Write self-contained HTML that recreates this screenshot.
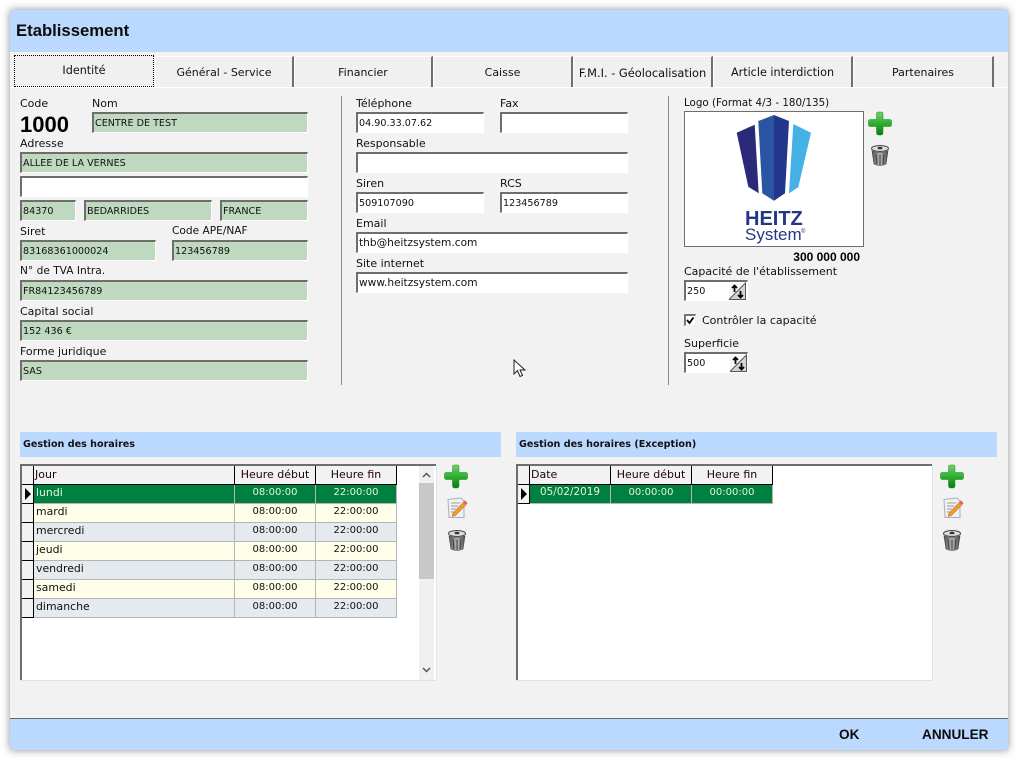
<!DOCTYPE html>
<html lang="fr"><head><meta charset="utf-8"><title>Etablissement</title>
<style>
html,body{margin:0;padding:0;background:#fff}
body{position:relative;width:1016px;height:758px;overflow:hidden;font:11px "DejaVu Sans","Liberation Sans",sans-serif;color:#111}
body *{box-sizing:border-box}
#w{position:absolute;left:10px;top:10px;width:998px;height:740px;background:#f2f2f2;box-shadow:0 0 8px rgba(0,0,0,.45)}
.a{position:absolute;white-space:nowrap}
.l{position:absolute;white-space:nowrap;height:13px;line-height:13px}
.f{position:absolute;height:21px;border:2px solid #6e6e6e;border-right:1px solid #fff;border-bottom:1px solid #fff;background:#fff;padding-left:1px;line-height:19px;white-space:nowrap;font-size:9.6px}
.m{font-size:10.6px}
.g{background:#bed9bf}
.tab{position:absolute;top:56px;height:31px;background:#f0f0f0;border-top:1px solid #fff;border-left:1px solid #fff;border-right:2px solid #6e6e6e;text-align:center;line-height:31px}
.hd{position:absolute;background:#f2f2f2;top:466px;height:19px;border-right:1px solid #000;border-bottom:1px solid #000;line-height:18px;white-space:nowrap;text-align:center;color:#200}
.c{position:absolute;height:19px;border-right:1px solid #b5b5b5;border-bottom:1px solid #b5b5b5;line-height:15px;text-align:center;white-space:nowrap;font-size:10px}
.n{font-size:10.9px;text-align:left;padding-left:2px}
.ind{position:absolute;height:19px;width:12px;background:#f2f2f2;border-right:1px solid #000;border-bottom:1px solid #000}
.sec{position:absolute;top:432px;height:25px;background:#bbd8fe;font-weight:bold;line-height:26px;padding-left:3px;font-size:9.6px;color:#111}
.grid{position:absolute;top:464px;width:416px;height:216px;background:#fff;border-top:2px solid #6e6e6e;border-left:2px solid #6e6e6e;box-shadow:1px 1px 0 #e2e2e2}
svg{position:absolute;overflow:visible}
</style></head><body>
<div id="w"></div>
<div class="a" style="left:10px;top:10px;width:998px;height:42px;background:#bbd8fe"></div>
<div class="a" style="left:16px;top:20px;font:bold 16.7px/22px 'Liberation Sans',sans-serif;color:#0c0c0c">Etablissement</div>

<div class="a" style="left:10px;top:87px;width:998px;height:1px;background:#fff"></div>
<div class="tab" style="left:14px;width:140px;top:55px;height:32px;border:1px dotted #000;line-height:30px;font-size:11.2px">Identité</div>
<div class="tab" style="left:155px;width:139px;line-height:32px">Général - Service</div>
<div class="tab" style="left:294px;width:139px;line-height:32px">Financier</div>
<div class="tab" style="left:433px;width:140px;line-height:32px">Caisse</div>
<div class="tab" style="left:573px;width:140px;line-height:32px;font-size:11.4px">F.M.I. - Géolocalisation</div>
<div class="tab" style="left:713px;width:140px;line-height:32px;font-size:11.2px">Article interdiction</div>
<div class="tab" style="left:853px;width:141px;line-height:32px">Partenaires</div>

<div class="l" style="left:20px;top:97px">Code</div>
<div class="l" style="left:92px;top:97px">Nom</div>
<div class="a" style="left:20px;top:112px;font:bold 22px/25px 'Liberation Sans',sans-serif;color:#000">1000</div>
<div class="f g" style="left:92px;top:112px;width:216px">CENTRE DE TEST</div>
<div class="l" style="left:20px;top:137px">Adresse</div>
<div class="f g" style="left:20px;top:152px;width:288px">ALLEE DE LA VERNES</div>
<div class="f" style="left:20px;top:176px;width:288px"></div>
<div class="f g" style="left:20px;top:200px;width:56px">84370</div>
<div class="f g" style="left:84px;top:200px;width:128px">BEDARRIDES</div>
<div class="f g" style="left:220px;top:200px;width:88px">FRANCE</div>
<div class="l" style="left:20px;top:225px">Siret</div>
<div class="l" style="left:172px;top:225px;font-size:10.6px">Code APE/NAF</div>
<div class="f g" style="left:20px;top:240px;width:136px">83168361000024</div>
<div class="f g" style="left:172px;top:240px;width:136px">123456789</div>
<div class="l" style="left:20px;top:265px;font-size:10.6px">N° de TVA Intra.</div>
<div class="f g" style="left:20px;top:280px;width:288px">FR84123456789</div>
<div class="l" style="left:20px;top:305px">Capital social</div>
<div class="f g" style="left:20px;top:320px;width:288px">152 436 €</div>
<div class="l" style="left:20px;top:345px">Forme juridique</div>
<div class="f g" style="left:20px;top:360px;width:288px">SAS</div>

<div class="a" style="left:341px;top:96px;width:1px;height:289px;background:#8a8a8a"></div>
<div class="a" style="left:668px;top:96px;width:1px;height:289px;background:#8a8a8a"></div>

<div class="l" style="left:356px;top:97px">Téléphone</div>
<div class="l" style="left:500px;top:97px">Fax</div>
<div class="f" style="left:356px;top:112px;width:128px">04.90.33.07.62</div>
<div class="f" style="left:500px;top:112px;width:128px"></div>
<div class="l" style="left:356px;top:137px">Responsable</div>
<div class="f" style="left:356px;top:152px;width:272px"></div>
<div class="l" style="left:356px;top:177px">Siren</div>
<div class="l" style="left:500px;top:177px">RCS</div>
<div class="f" style="left:356px;top:192px;width:128px">509107090</div>
<div class="f" style="left:500px;top:192px;width:128px">123456789</div>
<div class="l" style="left:356px;top:217px">Email</div>
<div class="f m" style="left:356px;top:232px;width:272px">thb@heitzsystem.com</div>
<div class="l" style="left:356px;top:257px">Site internet</div>
<div class="f m" style="left:356px;top:272px;width:272px">www.heitzsystem.com</div>

<div class="l" style="left:684px;top:97px;font-size:10.3px">Logo (Format 4/3 - 180/135)</div>
<div class="a" style="left:684px;top:111px;width:180px;height:136px;background:#fff;border:1px solid #6e6e6e"></div>
<svg style="left:684px;top:111px" width="180" height="136" viewBox="0 0 180 136">
<path d="M52.700 21.700 70.700 13.700 74.700 82.300 64.300 75.700Z" fill="#2b2a78"/>
<path d="M74.300 10 90 4V89.700L78.300 82.300Z" fill="#2a55a5"/>
<path d="M90 4 105 10 101 82.300 90 89.700Z" fill="#22378c"/>
<path d="M109.300 13 127 21.700 114.300 76.300 105 82.300Z" fill="#46b1e5"/>
<text x="61" y="114" font-family="Liberation Sans" font-weight="bold" font-size="20" fill="#233785">HEITZ</text>
<text x="61" y="129" font-family="Liberation Sans" font-size="17" fill="#233785">System</text>
<text x="117" y="122" font-family="Liberation Sans" font-size="6" fill="#233785">®</text>
</svg>
<div class="a" style="left:760px;top:250px;width:100px;text-align:right;font:bold 12px/15px 'Liberation Sans',sans-serif;color:#000">300 000 000</div>
<div class="l" style="left:684px;top:265px">Capacité de l'établissement</div>
<div class="f" style="left:684px;top:280px;width:64px;padding-left:1px">250</div>
<div class="l" style="left:702px;top:314px">Contrôler la capacité</div>
<div class="a" style="left:684px;top:314px;width:12px;height:12px;background:#fff;border:2px solid #777;border-right:1px solid #eee;border-bottom:1px solid #eee"></div>
<svg style="left:684px;top:314px" width="12" height="12"><path d="M3 6 5.500 9 9.500 3.500" fill="none" stroke="#000" stroke-width="1.800"/></svg>
<div class="l" style="left:684px;top:337px">Superficie</div>
<div class="f" style="left:684px;top:352px;width:64px">500</div>
<svg style="left:729px;top:283px" width="17" height="17" viewBox="0 0 17 17"><rect width="17" height="17" fill="#f6f6f6"/><path d="M0 16.500 16.500 0V16.500Z" fill="#d4d4d4"/><path d="M0 16.500H16.500V0L0 16.500" fill="none" stroke="#555"/><path d="M5.500 2.500V9M3 5 5.500 2.500 8 5" stroke="#000" stroke-width="1.800" fill="none"/><path d="M11.500 8V14.500M9 12 11.500 14.500 14 12" stroke="#000" stroke-width="1.800" fill="none"/></svg>
<svg style="left:730px;top:355px" width="17" height="17" viewBox="0 0 17 17"><rect width="17" height="17" fill="#f6f6f6"/><path d="M0 16.500 16.500 0V16.500Z" fill="#d4d4d4"/><path d="M0 16.500H16.500V0L0 16.500" fill="none" stroke="#555"/><path d="M5.500 2.500V9M3 5 5.500 2.500 8 5" stroke="#000" stroke-width="1.800" fill="none"/><path d="M11.500 8V14.500M9 12 11.500 14.500 14 12" stroke="#000" stroke-width="1.800" fill="none"/></svg>

<svg style="left:513px;top:359px" width="14" height="20"><path d="M1 1V15L4.500 11.500 7 17.500 9.500 16.500 7 11H12Z" fill="#fff" stroke="#222" stroke-width="1"/></svg>

<div class="sec" style="left:20px;width:481px">Gestion des horaires</div>
<div class="sec" style="left:516px;width:481px">Gestion des horaires (Exception)</div>

<div class="grid" style="left:20px"></div>
<div class="a" style="left:419px;top:466px;width:15px;height:214px;background:#f0f0f0"></div>
<div class="a" style="left:419px;top:483px;width:15px;height:96px;background:#c8c8c8"></div>
<svg style="left:419px;top:466px" width="15" height="214"><path d="M4 11 7.500 7.500 11 11M4 202 7.500 205.500 11 202" fill="none" stroke="#555" stroke-width="1.500"/></svg>

<div class="hd" style="left:22px;width:12px"></div>
<div class="hd" style="left:34px;width:201px;text-align:left;padding-left:1px">Jour</div>
<div class="hd" style="left:235px;width:81px">Heure début</div>
<div class="hd" style="left:316px;width:81px">Heure fin</div>

<div class="ind" style="left:22px;top:485px"></div>
<svg style="left:25px;top:488px" width="8" height="12"><path d="M0 0 6 6 0 12Z" fill="#000"/></svg>
<div class="c n" style="left:34px;top:485px;width:201px;background:#008040;color:#e8f4d8">lundi</div>
<div class="c" style="left:235px;top:485px;width:81px;background:#008040;color:#e8f4d8">08:00:00</div>
<div class="c" style="left:316px;top:485px;width:81px;background:#008040;color:#e8f4d8">22:00:00</div>
<div class="ind" style="left:22px;top:504px"></div>
<div class="c n" style="left:34px;top:504px;width:201px;background:#ffffe9">mardi</div>
<div class="c" style="left:235px;top:504px;width:81px;background:#ffffe9">08:00:00</div>
<div class="c" style="left:316px;top:504px;width:81px;background:#ffffe9">22:00:00</div>
<div class="ind" style="left:22px;top:523px"></div>
<div class="c n" style="left:34px;top:523px;width:201px;background:#e4eaee">mercredi</div>
<div class="c" style="left:235px;top:523px;width:81px;background:#e4eaee">08:00:00</div>
<div class="c" style="left:316px;top:523px;width:81px;background:#e4eaee">22:00:00</div>
<div class="ind" style="left:22px;top:542px"></div>
<div class="c n" style="left:34px;top:542px;width:201px;background:#ffffe9">jeudi</div>
<div class="c" style="left:235px;top:542px;width:81px;background:#ffffe9">08:00:00</div>
<div class="c" style="left:316px;top:542px;width:81px;background:#ffffe9">22:00:00</div>
<div class="ind" style="left:22px;top:561px"></div>
<div class="c n" style="left:34px;top:561px;width:201px;background:#e4eaee">vendredi</div>
<div class="c" style="left:235px;top:561px;width:81px;background:#e4eaee">08:00:00</div>
<div class="c" style="left:316px;top:561px;width:81px;background:#e4eaee">22:00:00</div>
<div class="ind" style="left:22px;top:580px"></div>
<div class="c n" style="left:34px;top:580px;width:201px;background:#ffffe9">samedi</div>
<div class="c" style="left:235px;top:580px;width:81px;background:#ffffe9">08:00:00</div>
<div class="c" style="left:316px;top:580px;width:81px;background:#ffffe9">22:00:00</div>
<div class="ind" style="left:22px;top:599px"></div>
<div class="c n" style="left:34px;top:599px;width:201px;background:#e4eaee">dimanche</div>
<div class="c" style="left:235px;top:599px;width:81px;background:#e4eaee">08:00:00</div>
<div class="c" style="left:316px;top:599px;width:81px;background:#e4eaee">22:00:00</div>

<div class="grid" style="left:516px"></div>
<div class="hd" style="left:518px;width:12px"></div>
<div class="hd" style="left:530px;width:81px;text-align:left;padding-left:1px">Date</div>
<div class="hd" style="left:611px;width:81px">Heure début</div>
<div class="hd" style="left:692px;width:81px">Heure fin</div>
<div class="ind" style="left:518px;top:485px"></div>
<svg style="left:521px;top:488px" width="8" height="12"><path d="M0 0 6 6 0 12Z" fill="#000"/></svg>
<div class="c" style="left:530px;top:485px;width:81px;background:#008040;color:#e8f4d8;font-size:10.4px">05/02/2019</div>
<div class="c" style="left:611px;top:485px;width:81px;background:#008040;color:#e8f4d8">00:00:00</div>
<div class="c" style="left:692px;top:485px;width:81px;background:#008040;color:#e8f4d8">00:00:00</div>

<svg width="0" height="0" style="left:0;top:0"><defs>
<linearGradient id="gp" x1="0" y1="0" x2="0" y2="1"><stop offset="0" stop-color="#6fd56f"/><stop offset=".5" stop-color="#2fae30"/><stop offset="1" stop-color="#0c7a14"/></linearGradient>
<linearGradient id="gt" x1="0" y1="0" x2="1" y2="0"><stop offset="0" stop-color="#4e4e4e"/><stop offset=".5" stop-color="#b8b8b8"/><stop offset="1" stop-color="#4a4a4a"/></linearGradient>
<g id="plus"><path d="M8.500 1.500Q8.500 0 10 0H13.500Q15 0 15 1.500V7.500H22Q23.500 7.500 23.500 9V13Q23.500 14.500 22 14.500H15V21Q15 23 13 23H10.500Q8.500 23 8.500 21V14.500H2Q.5 14.500 .5 13V9Q.5 7.500 2 7.500H8.500Z" fill="url(#gp)" stroke="#1a8a20" stroke-width=".5"/></g>
<g id="note"><path d="M1 2.500 14 1 17 4V20.500H2Z" fill="#eef0f2" stroke="#aab0b5"/><path d="M4 6H13M4 9H11M4 12H9M4 15H7" stroke="#9aa0a6"/><path d="M6 16 16 5.500 19 8 8.500 18.500 5 19.500Z" fill="#f09a2c" stroke="#b86a14" stroke-width=".5"/><path d="M16 5 18 3.500 20.500 6 19 8Z" fill="#e85a60"/></g>
<g id="trash"><ellipse cx="10" cy="3.500" rx="8.500" ry="3" fill="#ddd" stroke="#444"/><ellipse cx="10" cy="3" rx="2.500" ry="1.300" fill="#333"/><path d="M2 6 4 19Q10 22 16 19L18 6Q10 9 2 6Z" fill="url(#gt)" stroke="#444" stroke-width=".6"/><path d="M6 9 7 19M10 9.500V20M14 9 13 19" stroke="#3d3d3d"/></g>
</defs></svg>

<svg style="left:444px;top:465px" width="24" height="23"><use href="#plus"/></svg>
<svg style="left:447px;top:497px" width="21" height="22"><use href="#note"/></svg>
<svg style="left:447px;top:530px" width="20" height="21"><use href="#trash"/></svg>
<svg style="left:940px;top:465px" width="24" height="23"><use href="#plus"/></svg>
<svg style="left:943px;top:497px" width="21" height="22"><use href="#note"/></svg>
<svg style="left:942px;top:530px" width="20" height="21"><use href="#trash"/></svg>
<svg style="left:868px;top:112px" width="24" height="23"><use href="#plus"/></svg>
<svg style="left:870px;top:145px" width="20" height="21"><use href="#trash"/></svg>

<div class="a" style="left:10px;top:718px;width:998px;height:32px;background:#bbd8fe;border-top:1px solid #6a6a6a"></div>
<div class="a" style="left:839px;top:726px;font:bold 13.6px/18px 'Liberation Sans',sans-serif;color:#0c0c0c">OK</div>
<div class="a" style="left:922px;top:726px;font:bold 13.6px/18px 'Liberation Sans',sans-serif;color:#0c0c0c">ANNULER</div>
</body></html>
